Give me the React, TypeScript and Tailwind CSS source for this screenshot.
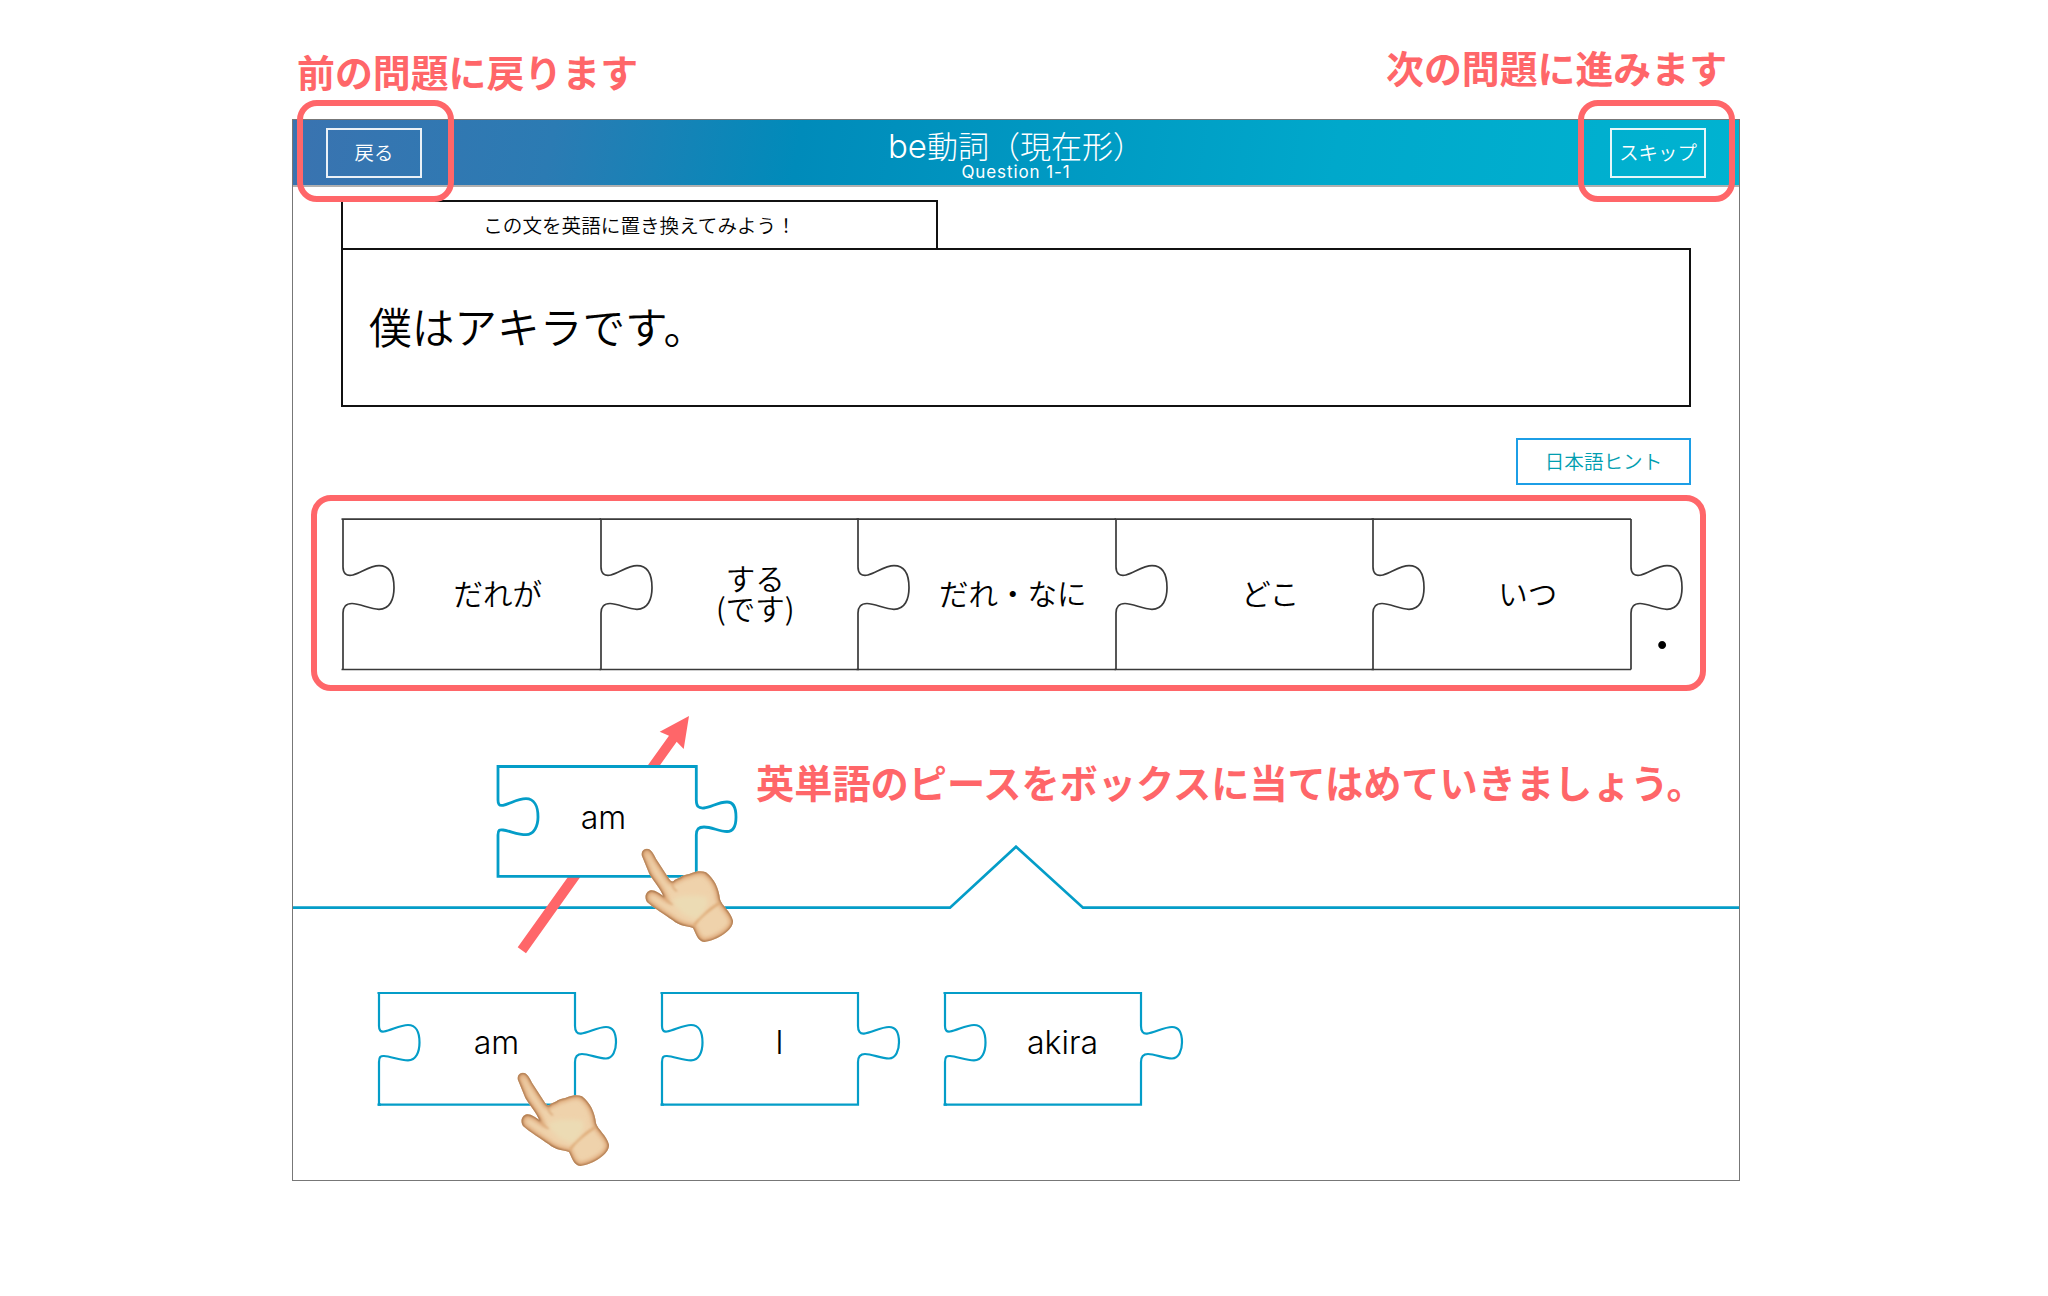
const JP = "font-['Noto_Sans_CJK_JP',sans-serif]";
const LATIN = "font-['Inter','Noto_Sans_CJK_JP',sans-serif]";

const slots = [["だれが"], ["する", "(です)"], ["だれ・なに"], ["どこ"], ["いつ"]];
const words = ["am", "I", "akira"];

const SLOT_JOINT =
  "V48 C0 54 3 57.5 10 56 C17 54.5 27 46.7 36 46.7 C48 46.7 51 58 51 68.7 C51 80 47 90.3 36 90.3 C27 90.3 17 84.5 9 84.5 C3 84.5 0 88 0 94 V150.5";

function Slot({ lines }: { lines: string[] }) {
  return (
    <div className="relative flex h-[145px] w-[257.5px] shrink-0 items-center justify-center pl-[52px]">
      <svg className="absolute left-0 top-0 overflow-visible" width="258" height="151" fill="none" stroke="#3a3a3a" strokeWidth="1.7">
        <path d={"M0 0 " + SLOT_JOINT} />
        <path d="M-1.5 .2 H258 M-1.5 150.5 H258" />
      </svg>
      <div className={`${JP} text-center text-[29.5px] leading-[30px] font-[350] whitespace-nowrap text-black`}>
        {lines.map((l) => (
          <div key={l}>{l}</div>
        ))}
      </div>
    </div>
  );
}

function Piece({ word }: { word: string }) {
  return (
    <div className="relative flex h-[112px] w-[196px] items-start justify-center pt-[34px] pl-[39px]">
      <svg className="absolute left-0 top-0 overflow-visible" width="238" height="112" fill="#fff" stroke="#049dc8" strokeWidth="2.2">
        <path d="M0 0 H196 V33 C196 38 198 41 202 40.6 C209 40 219 34 227 34 C235 34 237 42 237 49.3 C237 57 234 65.5 227 65.5 C219 65.5 210 61 203 61 C198 61 196 64 196 69 V111.7 H0 V69 C0 64 1.5 62.8 5 63 C12 63.5 21 67.3 29 67.3 C37 67.3 40.5 59 40.5 49.5 C40.5 39 37 32 29 32 C21 32 12 37.5 5 38.5 C1.5 39 0 37 0 33 Z" />
        <path d="M-1.5 0 H2 M-1.5 111.7 H2" />
      </svg>
      <span className={`${LATIN} relative text-[32px] leading-none font-light text-black`}>{word}</span>
    </div>
  );
}

function Hand({ id }: { id: string }) {
  const d =
    "M484 466 C482 450 498 442 509 449 C518 456 522 466 527 476 L566 536 Q574 548 580 543 C586 535 598 536 604 529 C614 523 624 524 634 519 C650 513 664 512 677 517 C702 536 716 566 719 598 C724 616 752 636 758 662 C760 690 712 720 672 726 C652 724 646 700 638 684 C620 678 600 680 576 660 C556 646 520 624 500 606 C491 592 496 574 512 571 C526 570 536 580 549 588 C540 566 520 544 507 522 Z";
  return (
    <svg width="100" height="100" viewBox="470 435 300 300" className="block">
      <defs>
        <clipPath id={id + "c"}><path d={d} /></clipPath>
        <filter id={id + "b"} x="-20%" y="-20%" width="140%" height="140%"><feGaussianBlur stdDeviation="7" /></filter>
        <filter id={id + "s"} x="-20%" y="-20%" width="140%" height="140%"><feGaussianBlur stdDeviation="2.5" /></filter>
      </defs>
      <path d={d} fill="#efd2ab" />
      <g clipPath={`url(#${id}c)`} fill="none">
        <path d={d} stroke="#dda475" strokeWidth="20" filter={`url(#${id}b)`} />
        <path d="M576 545 Q574 565 590 574 M549 588 Q560 606 578 614" stroke="#dba878" strokeWidth="5" filter={`url(#${id}s)`} />
        <path d="M638 684 Q652 650 722 606" stroke="#e0ae7c" strokeWidth="8" filter={`url(#${id}s)`} />
        <path d="M576 600 Q600 580 680 590 Q690 620 650 656 Q600 650 576 600Z" fill="#ecdbb4" filter={`url(#${id}b)`} />
        <path d={d} stroke="#8f5f38" strokeWidth="5" filter={`url(#${id}s)`} />
      </g>
    </svg>
  );
}

export default function App() {
  return (
    <div className="relative h-[1296px] w-[2048px] overflow-hidden bg-white">
      <main className="mt-[119px] ml-[292px] flex h-[1062px] w-[1448px] flex-col border border-[#777]">
        <header className="flex h-[67px] shrink-0 items-start justify-between border-b-2 border-[#b0b0b0] bg-[linear-gradient(100deg,#3a73b0_0%,#2b7bb3_18%,#008bba_35%,#00a8cb_72%,#00b3d1_100%)] px-[33px] pt-2">
          <button className={`${JP} h-[50px] w-24 border-2 border-white/90 pb-0.5 text-[19.4px] font-[350] text-white`}>戻る</button>
          <div className="-mt-2 flex flex-col items-center text-white">
            <h1 className={`${LATIN} mt-[3px] text-[31px] leading-[46px] font-light whitespace-nowrap`}>
              <span className="text-[33px]">be</span>動詞（現在形）
            </h1>
            <p className={`${LATIN} -mt-[7px] text-[17px] leading-[18px] font-normal tracking-[0.9px]`}>Question 1-1</p>
          </div>
          <button className={`${JP} h-[50px] w-24 border-2 border-white/90 pb-0.5 text-[19.4px] font-[350] whitespace-nowrap text-white`}>スキップ</button>
        </header>

        <section className="mt-[13px] flex flex-col px-[48px]">
          <div className={`${JP} flex h-[50px] w-[597px] items-center justify-center border-2 border-b-0 border-[#111] pb-[3px] text-[19.6px] font-[350] text-black`}>
            この文を英語に置き換えてみよう！
          </div>
          <div className={`${JP} -mt-0.5 flex h-[159px] items-center border-2 border-[#111] pb-[5px] pl-[26px] text-[42.7px] font-[350] text-black`}>
            僕はアキラです。
          </div>
          <button className={`${JP} mt-[31px] h-[47px] w-[175px] self-end border-2 border-[#1c9ee6] pb-0.5 text-[19.6px] font-[350] text-[#009eb0]`}>
            日本語ヒント
          </button>
        </section>

        <section className="mt-[10px] ml-[18px] flex h-[196px] w-[1395px] shrink-0 rounded-[20px] border-[6px] border-[#ff6669] pt-[18px] pl-[26px]">
          {slots.map((s) => (
            <Slot key={s[0]} lines={s} />
          ))}
          <div className="relative h-[150px] w-[54px]">
            <svg className="absolute left-0 top-0 overflow-visible" width="54" height="151" fill="none" stroke="#3a3a3a" strokeWidth="1.7">
              <path d={"M0 0 " + SLOT_JOINT} />
            </svg>
            <span className="absolute top-[78px] left-[23px] font-['Inter'] text-[60px] leading-[60px] text-black">.</span>
          </div>
        </section>

        <section className="mt-[154px] shrink-0">
          <svg className="block" width="1446" height="66" fill="none" stroke="#049dc8" strokeWidth="2.7">
            <path d="M0 62.7 H657 L723 1.7 L790 62.7 H1446" />
          </svg>
          <div className="mt-[82px] ml-[86px] flex gap-[87px]">
            {words.map((w) => (
              <Piece key={w} word={w} />
            ))}
          </div>
        </section>
      </main>

      <svg className="absolute top-[710px] left-[510px]" width="190" height="250" viewBox="510 710 190 250">
        <path fill="#ff6669" d="M517.7 947.3 L669 735.7 L659.7 731.7 L689 716 L683.7 749 L676.7 741.7 L526 953.3 Z" />
      </svg>

      <div className="absolute top-[766px] left-[498px] flex h-[110px] w-[198px] items-start justify-center pt-9 pl-[13px]">
        <svg className="absolute left-0 top-0 overflow-visible" width="240" height="110" fill="#fff" stroke="#049dc8" strokeWidth="2.8">
          <path d="M0 .5 H198.3 V34 C198.3 40 200 42.5 206 42 C213 41.5 220 36 229 36 C236 36 238 43 238 51 C238 59 236 65.5 229 65.5 C221 65.5 214 61 206 61 C200 61 198.3 64 198.3 69 V110.3 H0 V69 C0 64 1.5 63.5 5 64 C12 65 20 68.7 28 68.7 C36 68.7 40 60 40 51 C40 40 36 32.7 28 32.7 C19 32.7 12 38 5 39.3 C1 40 0 38 0 34 Z" />
        </svg>
        <span className={`${LATIN} relative text-[32px] leading-none font-light text-black`}>am</span>
      </div>

      <div className="absolute top-[845px] left-[637px]"><Hand id="u" /></div>
      <div className="absolute top-[1069px] left-[513px]"><Hand id="l" /></div>

      <div className="absolute top-[100px] left-[297px] h-[102px] w-[157px] rounded-[20px] border-[6px] border-[#ff6669]" />
      <div className="absolute top-[100px] left-[1578px] h-[102px] w-[157px] rounded-[20px] border-[6px] border-[#ff6669]" />
      <p className={`${JP} absolute top-[43px] left-[297px] text-[37.9px] leading-[56px] font-bold whitespace-nowrap text-[#ff6669]`}>前の問題に戻ります</p>
      <p className={`${JP} absolute top-[39px] left-[1386px] text-[37.9px] leading-[56px] font-bold whitespace-nowrap text-[#ff6669]`}>次の問題に進みます</p>
      <p className={`${JP} absolute top-[754px] left-[756px] text-[38.2px] leading-[56px] font-bold whitespace-nowrap text-[#ff6669]`}>
        英単語のピースをボックスに当てはめていきましょう。
      </p>
    </div>
  );
}
